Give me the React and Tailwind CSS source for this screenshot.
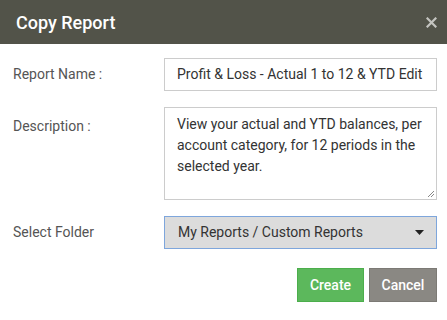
import React from "react";

export default function App() {
  return (
    <div className="w-[447px] h-[320px] bg-white font-['Roboto',sans-serif] overflow-hidden">
      <div className="h-[44px] bg-[#525349] flex items-center justify-between pl-[16px] pr-[10px]">
        <div className="text-white text-[18px] font-medium">Copy Report</div>
        <svg width="11" height="11" viewBox="0 0 11 11" className="text-[#c4c4c0]">
          <path d="M1.5 1.5 L9.5 9.5 M9.5 1.5 L1.5 9.5" stroke="currentColor" strokeWidth="2.2" strokeLinecap="square" />
        </svg>
      </div>
      <div className="pl-[13px] pr-[10px] pt-[14px]">
        <div className="flex items-center">
          <label className="w-[151px] text-[14px] text-[#555]">Report Name :</label>
          <div className="w-[273px] h-[33px] border border-[#ccc] flex items-center px-[12px] text-[14px] text-[#333] whitespace-nowrap overflow-hidden">
            Profit &amp; Loss - Actual 1 to 12 &amp; YTD Edit
          </div>
        </div>
        <div className="flex mt-[16px]">
          <label className="w-[151px] text-[14px] text-[#555] pt-[9px]">Description :</label>
          <div className="relative w-[273px] h-[93px] border border-[#ccc] px-[12px] pt-[6px] text-[14px] leading-[21px] text-[#333]">
            View your actual and YTD balances, per account category, for 12 periods in the selected year.
            <svg width="8" height="8" viewBox="0 0 8 8" className="absolute right-[1px] bottom-[1px]">
              <path d="M7 1 L1 7 M7 4 L4 7" stroke="#888" strokeWidth="1" />
            </svg>
          </div>
        </div>
        <div className="flex items-center mt-[16px]">
          <label className="w-[151px] text-[14px] text-[#555]">Select Folder</label>
          <div className="w-[273px] h-[33px] border border-[#7ea6dc] bg-[#dcdcdc] flex items-center justify-between pl-[13px] pr-[12px] text-[14px] text-[#333]">
            <span>My Reports / Custom Reports</span>
            <svg width="9" height="5" viewBox="0 0 9 5">
              <path d="M0 0 H9 L4.5 5 Z" fill="#222" />
            </svg>
          </div>
        </div>
        <div className="flex justify-end gap-[5px] mt-[19px]">
          <button className="w-[67px] h-[34px] bg-[#5cb85c] border border-[#4cae4c] text-white text-[14px] font-medium">Create</button>
          <button className="w-[68px] h-[34px] bg-[#8a8883] border border-[#7c7a75] text-white text-[14px] font-medium">Cancel</button>
        </div>
      </div>
    </div>
  );
}
